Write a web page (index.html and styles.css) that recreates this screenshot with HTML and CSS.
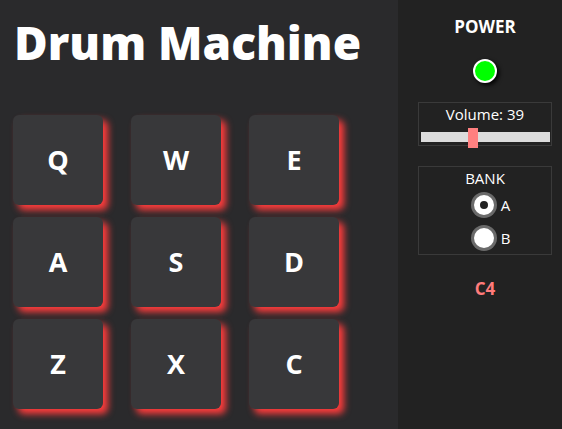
FILE: index.html
```html
<!DOCTYPE html>
<html>
<head>
<meta charset="utf-8">
<link rel="stylesheet" href="styles.css">
</head>
<body>
<div class="machine">
  <main class="left">
    <h1 class="title">Drum Machine</h1>
    <div class="pads">
      <div class="pad">Q</div>
      <div class="pad">W</div>
      <div class="pad">E</div>
      <div class="pad">A</div>
      <div class="pad">S</div>
      <div class="pad">D</div>
      <div class="pad">Z</div>
      <div class="pad">X</div>
      <div class="pad">C</div>
    </div>
  </main>
  <aside class="panel">
    <div class="power-label">POWER</div>
    <div class="power-led"></div>
    <div class="box volume">
      <div class="box-label">Volume: 39</div>
      <div class="track"><div class="thumb"></div></div>
    </div>
    <div class="box bank">
      <div class="box-label">BANK</div>
      <label class="radio-row"><span class="radio checked"></span><span>A</span></label>
      <label class="radio-row"><span class="radio"></span><span>B</span></label>
    </div>
    <div class="display">C4</div>
  </aside>
</div>
</body>
</html>
```
FILE: styles.css
```css
html, body {
  margin: 0;
  padding: 0;
  height: 100%;
  background: #29292b;
  font-family: "Open Sans", "Noto Sans", sans-serif;
  color: #fff;
}
.machine {
  display: flex;
  height: 429px;
  width: 562px;
}
.left {
  width: 398px;
  background: #2a2a2c;
  box-sizing: border-box;
  padding: 0 0 0 13px;
}
.title {
  margin: 0;
  padding: 11px 0 0 1px;
  font-size: 46px;
  font-weight: 800;
  line-height: 62px;
  letter-spacing: 0;
}
.pads {
  margin-top: 42px;
  display: grid;
  grid-template-columns: repeat(3, 90px);
  grid-auto-rows: 90px;
  column-gap: 28px;
  row-gap: 12px;
}
.pad {
  background: #38383a;
  border-radius: 6px;
  box-shadow: 5px 5px 7px #ff3c3c;
  display: flex;
  align-items: center;
  justify-content: center;
  font-size: 27px;
  font-weight: 700;
  padding-bottom: 2px;
  box-sizing: border-box;
}
.panel {
  width: 164px;
  background: #222222;
  display: flex;
  flex-direction: column;
  align-items: center;
  box-sizing: border-box;
  padding-top: 16px;
  padding-left: 10px;
}
.power-label {
  font-size: 17px;
  font-weight: 700;
  line-height: 22px;
}
.power-led {
  width: 20px;
  height: 20px;
  border-radius: 50%;
  background: #00ff00;
  border: 2px solid #fff;
  box-shadow: 2px 2px 4px #000;
  margin-top: 21px;
}
.box {
  width: 134px;
  box-sizing: border-box;
  border: 1px solid #3a3a3a;
  display: flex;
  flex-direction: column;
  align-items: center;
}
.volume {
  margin-top: 19px;
  height: 44px;
  padding: 1px 2px 0;
}
.box-label {
  font-size: 15px;
  line-height: 21px;
}
.track {
  position: relative;
  width: 129px;
  height: 10px;
  background: #dcdcdc;
  margin-top: 7px;
}
.thumb {
  position: absolute;
  left: 47px;
  top: -4px;
  width: 10px;
  height: 20px;
  background: #ff8080;
}
.bank {
  margin-top: 20px;
  height: 89px;
  padding-top: 1px;
}
.radio-row {
  display: flex;
  align-items: center;
  gap: 7px;
  font-size: 15px;
  height: 33px;
  margin-left: 14px;
}
.radio {
  width: 20px;
  height: 20px;
  border-radius: 50%;
  background: #fff;
  box-shadow: 0 0 0 3px #6a6a6a;
  box-sizing: border-box;
}
.radio.checked {
  border: 6px solid #fff;
  background: #222;
}
.display {
  margin-top: 22px;
  font-size: 17px;
  font-weight: 700;
  color: #ff7b7b;
}
```
